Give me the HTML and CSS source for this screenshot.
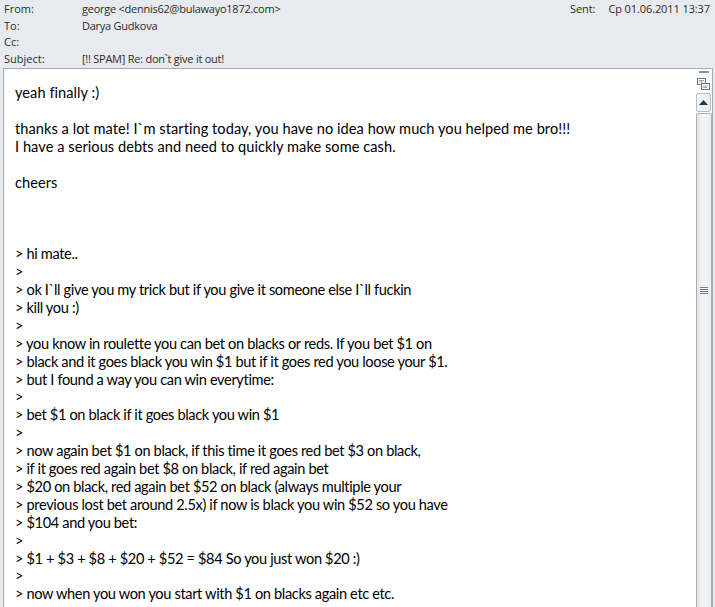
FILE: index.html
```html
<!DOCTYPE html>
<html lang="en">
<head>
    <meta charset="UTF-8">
    <title>[!! SPAM] Re: don`t give it out!</title>
    <link rel="stylesheet" href="styles.css">
</head>
<body>

<div class="message">
    <div class="header">
        <div class="header-fields">
            <div class="field"><span class="label">From:</span><span class="value">george &lt;dennis62@bulawayo1872.com&gt;</span></div>
            <div class="field"><span class="label">To:</span><span class="value">Darya Gudkova</span></div>
            <div class="field"><span class="label">Cc:</span><span class="value"></span></div>
            <div class="field"><span class="label">Subject:</span><span class="value">[!! SPAM] Re: don`t give it out!</span></div>
        </div>
        <div class="sent">
            <span class="label-sent">Sent:</span><span>Cp 01.06.2011 13:37</span>
        </div>
    </div>

    <div class="body-frame">
        <div class="body-text">
            <p>yeah finally :)</p>
            <p>&nbsp;</p>
            <p>thanks a lot mate! I`m starting today, you have no idea how much you helped me bro!!!</p>
            <p>I have a serious debts and need to quickly make some cash.</p>
            <p>&nbsp;</p>
            <p>cheers</p>
            <p>&nbsp;</p>
            <p>&nbsp;</p>
            <p>&nbsp;</p>
            <div class="quoted">
                <p>&gt; hi mate..</p>
                <p>&gt;</p>
                <p>&gt; ok I`ll give you my trick but if you give it someone else I`ll fuckin</p>
                <p>&gt; kill you :)</p>
                <p>&gt;</p>
                <p>&gt; you know in roulette you can bet on blacks or reds. If you bet $1 on</p>
                <p>&gt; black and it goes black you win $1 but if it goes red you loose your $1.</p>
                <p>&gt; but I found a way you can win everytime:</p>
                <p>&gt;</p>
                <p>&gt; bet $1 on black if it goes black you win $1</p>
                <p>&gt;</p>
                <p>&gt; now again bet $1 on black, if this time it goes red bet $3 on black,</p>
                <p>&gt; if it goes red again bet $8 on black, if red again bet</p>
                <p>&gt; $20 on black, red again bet $52 on black (always multiple your</p>
                <p>&gt; previous lost bet around 2.5x) if now is black you win $52 so you have</p>
                <p>&gt; $104 and you bet:</p>
                <p>&gt;</p>
                <p>&gt; $1 + $3 + $8 + $20 + $52 = $84 So you just won $20 :)</p>
                <p>&gt;</p>
                <p>&gt; now when you won you start with $1 on blacks again etc etc.</p>
            </div>
        </div>

        <div class="scrollbar">
            <div class="split-bar"></div>
            <svg class="split-icon" width="13" height="12" viewBox="0 0 13 12">
                <rect x="0.5" y="0.5" width="8" height="6" fill="#fff" stroke="#6d7684"/>
                <rect x="4.5" y="5.5" width="8" height="6" fill="#fff" stroke="#6d7684"/>
                <path d="M2 2.5h5M2 4h4M6 8h5M6 9.5h4" stroke="#9aa3ae" stroke-width="1"/>
            </svg>
            <div class="arrow-btn">
                <svg width="9" height="5" viewBox="0 0 9 5"><path d="M0 5L4.5 0L9 5Z" fill="#1f3558"/></svg>
            </div>
            <div class="thumb">
                <div class="grip"></div>
            </div>
        </div>
    </div>
</div>

</body>
</html>
```

FILE: styles.css
```css
body {
    margin: 0;
    background-color: #e7eaef;
    font-family: "Open Sans", "Noto Sans", sans-serif;
    overflow: hidden;
}

.message {
    width: 715px;
    height: 607px;
    display: flex;
    flex-direction: column;
}

.header {
    display: flex;
    justify-content: space-between;
    padding: 0 3px 0 4px;
    height: 68px;
    font-size: 11px;
    color: #2b2b2b;
}

.header-fields {
    padding-top: 1px;
}

.field {
    display: flex;
    height: 16.5px;
    line-height: 16px;
}

.value {
    letter-spacing: -0.25px;
}

.label {
    width: 78px;
}

.sent {
    padding-top: 1px;
    line-height: 16px;
    padding-right: 2px;
    letter-spacing: -0.1px;
}

.label-sent {
    margin-right: 13px;
}

.body-frame {
    flex: 1;
    margin-left: 3px;
    margin-right: 2px;
    border-top: 1px solid #a6abb2;
    border-left: 1px solid #a6abb2;
    border-right: 1px solid #a6abb2;
    background-color: #fff;
    display: flex;
    overflow: hidden;
}

.body-text {
    flex: 1;
    padding: 15px 0 0 11px;
    font-family: "Lato", "Open Sans", sans-serif;
    font-size: 14.6px;
    line-height: 17.9px;
    color: #000;
    letter-spacing: 0.05px;
}

.body-text p {
    margin: 0;
    white-space: nowrap;
}

.quoted {
    letter-spacing: -0.36px;
}

.scrollbar {
    width: 17px;
    display: flex;
    flex-direction: column;
    align-items: center;
    background-color: #fff;
}

.split-bar {
    width: 10px;
    height: 2px;
    background-color: #8d949e;
    margin-top: 2px;
}

.split-icon {
    margin-top: 5px;
}

.arrow-btn {
    width: 13px;
    height: 17px;
    margin-top: 3px;
    border: 1px solid #b6bcc6;
    border-radius: 2px;
    background: linear-gradient(to right, #f4f5f7, #e9ebee);
    display: flex;
    align-items: center;
    justify-content: center;
}

.thumb {
    width: 14px;
    flex: 1;
    margin-top: 1px;
    border: 1px solid #a9aeb6;
    border-bottom: none;
    border-radius: 2px 2px 0 0;
    background: linear-gradient(to right, #e2e4e7, #f3f4f6 40%, #eceef0);
    position: relative;
}

.grip {
    position: absolute;
    left: 3px;
    top: 173px;
    width: 8px;
    height: 7px;
    background: repeating-linear-gradient(to bottom, #737a84 0, #737a84 1px, transparent 1px, transparent 2px);
}
```
